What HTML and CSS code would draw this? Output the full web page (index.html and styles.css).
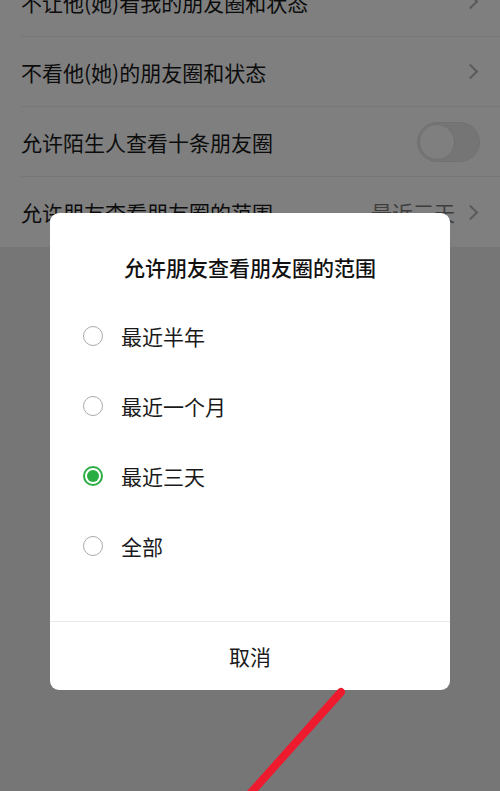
FILE: index.html
```html
<!DOCTYPE html>
<html lang="zh-CN">
  <head>
    <meta charset="UTF-8" />
    <meta name="viewport" content="width=device-width, initial-scale=1.0" />
    <title>朋友圈权限</title>
    <link rel="stylesheet" href="styles.css">
  </head>
  <body>
    <!-- Settings list behind the dialog -->
    <ul class="settings">
      <li class="row">
        <span class="label">不让他(她)看我的朋友圈和状态</span>
        <span class="chevron"></span>
      </li>
      <li class="row">
        <span class="label">不看他(她)的朋友圈和状态</span>
        <span class="chevron"></span>
      </li>
      <li class="row">
        <span class="label">允许陌生人查看十条朋友圈</span>
        <span class="switch"><span class="knob"></span></span>
      </li>
      <li class="row">
        <span class="label">允许朋友查看朋友圈的范围</span>
        <span class="value">最近三天</span>
        <span class="chevron"></span>
      </li>
    </ul>

    <!-- Dimmed mask + dialog -->
    <div class="mask">
      <div class="dialog">
        <h2 class="dialog-title">允许朋友查看朋友圈的范围</h2>
        <ul class="options">
          <li class="option"><span class="radio"></span>最近半年</li>
          <li class="option"><span class="radio"></span>最近一个月</li>
          <li class="option checked"><span class="radio"></span>最近三天</li>
          <li class="option"><span class="radio"></span>全部</li>
        </ul>
        <div class="cancel">取消</div>
      </div>
    </div>

    <!-- Red annotation stroke -->
    <svg class="mark" width="500" height="791" viewBox="0 0 500 791">
      <line x1="341" y1="692" x2="240" y2="805" stroke="#ee1a2e" stroke-width="8" stroke-linecap="round" />
    </svg>
  </body>
</html>
```

FILE: styles.css
```css
/* Reset & Base */
* {
  margin: 0;
  padding: 0;
  box-sizing: border-box;
}

body {
  font-family: "Noto Sans CJK SC", "Noto Sans", sans-serif;
  background-color: #ededed;
  color: #191919;
  height: 791px;
  overflow: hidden;
}

ul {
  list-style: none;
}

/* Settings list */
.settings {
  background-color: #fff;
  margin-top: -33px;
  padding-left: 21px;
}

.row {
  height: 70px;
  display: flex;
  align-items: center;
  padding-right: 20px;
  border-bottom: 1px solid #efefef;
  font-size: 21px;
}

.row:last-child {
  border-bottom: none;
}

.label {
  flex: 1;
}

.value {
  color: #7c7c7c;
  margin-right: 10px;
}

.chevron {
  width: 11px;
  height: 11px;
  border-top: 2px solid #b5b5b5;
  border-right: 2px solid #b5b5b5;
  transform: rotate(45deg);
  margin-right: 4px;
}

.switch {
  width: 63px;
  height: 40px;
  border-radius: 20px;
  background-color: #ebebeb;
  border: 1px solid #e2e2e2;
  display: flex;
  align-items: center;
  padding: 1px;
}

.knob {
  width: 36px;
  height: 36px;
  border-radius: 50%;
  background-color: #fff;
  border: 1px solid #e0e0e0;
}

/* Mask & Dialog */
.mask {
  position: fixed;
  inset: 0;
  background-color: rgba(0, 0, 0, 0.5);
  padding-top: 213px;
  padding-left: 50px;
}

.dialog {
  width: 400px;
  height: 477px;
  background-color: #fff;
  border-radius: 9px;
  display: flex;
  flex-direction: column;
}

.dialog-title {
  font-size: 21px;
  font-weight: 500;
  line-height: 36px;
  text-align: center;
  padding-top: 36px;
  padding-bottom: 16px;
  color: #111;
}

.options {
  padding-bottom: 40px;
  border-bottom: 1px solid #eaeaea;
}

.option {
  height: 70px;
  display: flex;
  align-items: center;
  padding-left: 33px;
  font-size: 21px;
  color: #1a1a1a;
}

.radio {
  width: 20px;
  height: 20px;
  border-radius: 50%;
  border: 1.5px solid #aaa;
  margin-right: 18px;
  display: flex;
  align-items: center;
  justify-content: center;
}

.option.checked .radio {
  border: 2px solid #2aae44;
}

.option.checked .radio::after {
  content: "";
  width: 12px;
  height: 12px;
  border-radius: 50%;
  background-color: #2aae44;
}

.cancel {
  flex: 1;
  display: flex;
  align-items: center;
  justify-content: center;
  font-size: 21px;
  color: #1a1a1a;
}

/* Annotation */
.mark {
  position: fixed;
  top: 0;
  left: 0;
}
```
